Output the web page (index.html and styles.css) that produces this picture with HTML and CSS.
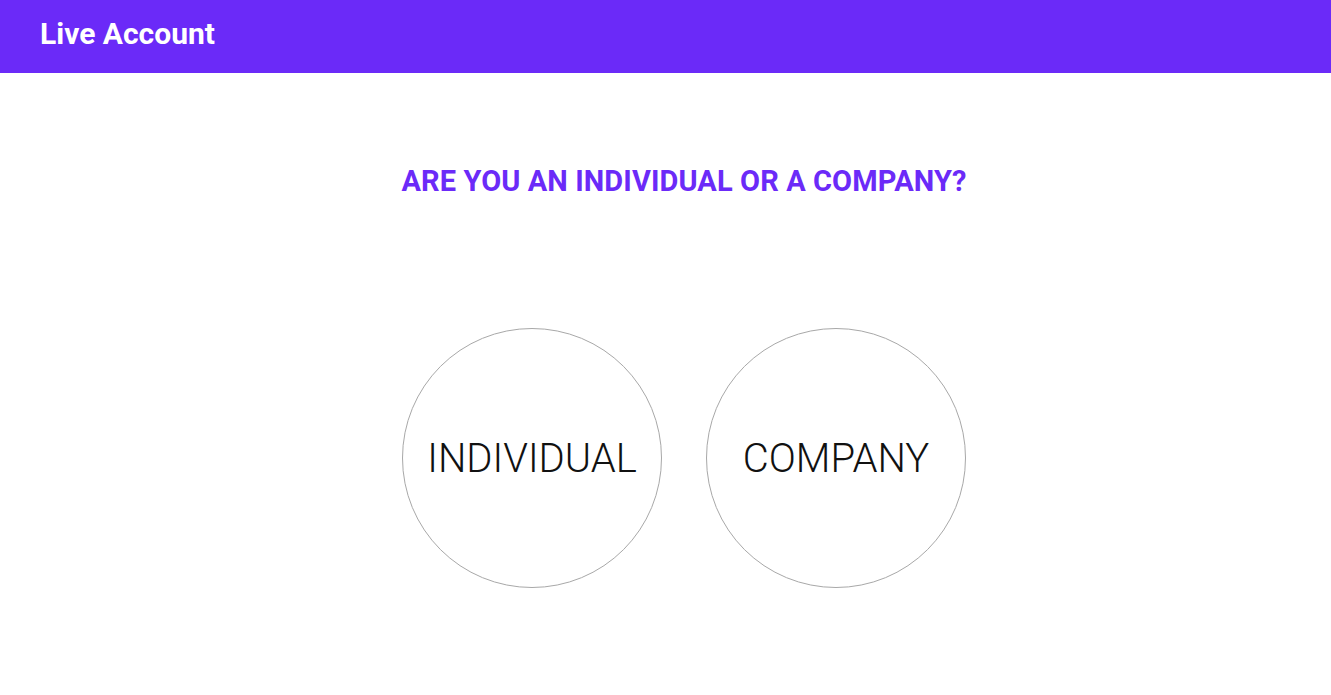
FILE: index.html
```html
<!DOCTYPE html>
<html lang="en">
<head>
  <meta charset="UTF-8" />
  <meta name="viewport" content="width=device-width, initial-scale=1.0" />
  <title>Live Account</title>
  <link rel="stylesheet" href="styles.css">
</head>
<body>

  <header class="top-bar">
    <h1>Live Account</h1>
  </header>

  <main class="account-type">
    <h2>ARE YOU AN INDIVIDUAL OR A COMPANY?</h2>

    <div class="choices">
      <button class="choice">INDIVIDUAL</button>
      <button class="choice">COMPANY</button>
    </div>
  </main>

</body>
</html>
```

FILE: styles.css
```css
* { box-sizing: border-box; }

body {
  margin: 0;
  padding: 0;
  font-family: Roboto, "Liberation Sans", sans-serif;
  background: #fff;
  color: #111;
}

.top-bar {
  background: #6b2af8;
  height: 73px;
  display: flex;
  align-items: center;
  padding: 0 40px 6px;
}

.top-bar h1 {
  margin: 0;
  color: #fff;
  font-size: 30px;
  font-weight: 700;
  letter-spacing: 0;
}

.account-type {
  display: flex;
  flex-direction: column;
  align-items: center;
  padding-left: 37px;
}

.account-type h2 {
  margin: 92px 0 0;
  color: #6b2af8;
  font-size: 29px;
  font-weight: 700;
  line-height: 32px;
  letter-spacing: 0.1px;
}

.choices {
  display: flex;
  gap: 44px;
  margin-top: 131px;
}

.choice {
  width: 260px;
  height: 260px;
  border-radius: 50%;
  border: 1px solid #a8a8a8;
  background: #fff;
  font-family: Roboto, "Liberation Sans", sans-serif;
  font-weight: 300;
  font-size: 40px;
  color: #111;
  cursor: pointer;
  padding: 0;
}
```
